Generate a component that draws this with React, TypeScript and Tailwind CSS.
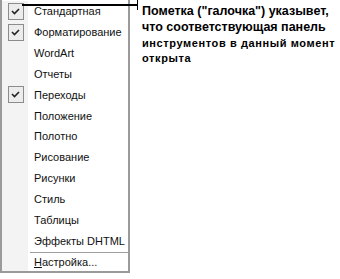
import React from "react";

const items: { label: React.ReactNode; checked?: boolean }[] = [
  { label: "Стандартная", checked: true },
  { label: "Форматирование", checked: true },
  { label: "WordArt" },
  { label: "Отчеты" },
  { label: "Переходы", checked: true },
  { label: "Положение" },
  { label: "Полотно" },
  { label: "Рисование" },
  { label: "Рисунки" },
  { label: "Стиль" },
  { label: "Таблицы" },
  { label: "Эффекты DHTML" },
];

function Check() {
  return (
    <svg width="9" height="7" viewBox="0 0 9 7">
      <path d="M1 3 L3.5 5.5 L8 1" fill="none" stroke="#222" strokeWidth="1.6" />
    </svg>
  );
}

function Row({ label, checked }: { label: React.ReactNode; checked?: boolean }) {
  return (
    <div className="flex h-[21px] items-center">
      <div className="flex w-[26px] h-full items-center justify-center bg-[#f3f3f3]">
        {checked ? (
          <div className="ml-[1px] flex h-[17px] w-[16px] items-center justify-center border border-[#8c8c8c] bg-[#ececec]">
            <Check />
          </div>
        ) : null}
      </div>
      <div className="whitespace-nowrap pl-[6px] text-[11px] text-[#111]">{label}</div>
    </div>
  );
}

export default function App() {
  return (
    <div
      className="relative flex h-[279px] w-[340px] bg-white"
      style={{ fontFamily: '"Liberation Sans", Arial, sans-serif' }}
    >
      <div className="flex h-[273px] w-[130px] shrink-0 flex-col border-l-2 border-r-2 border-b-2 border-[#9a9a9a] pt-[1px]">
        {items.map((it, i) => (
          <Row key={i} label={it.label} checked={it.checked} />
        ))}
        <div className="flex h-[3px] items-center">
          <div className="h-full w-[26px] bg-[#f3f3f3]" />
          <div className="ml-[2px] h-[1px] flex-1 bg-[#a0a0a0]" />
        </div>
        <div className="flex flex-1 items-center">
          <div className="h-full w-[26px] bg-[#f3f3f3]" />
          <div className="whitespace-nowrap pl-[6px] text-[11px] text-[#111]">
            <span className="underline">Н</span>астройка...
          </div>
        </div>
      </div>

      <div className="flex flex-col whitespace-nowrap pl-[12px] pt-[3px] font-bold text-black">
        <div className="text-[12.5px] leading-[16px]">Пометка ("галочка") указывет,</div>
        <div className="text-[12.5px] leading-[16px]">что соответствующая панель</div>
        <div className="text-[11px] leading-[16px] tracking-[0.6px]">инструментов в данный момент</div>
        <div className="text-[11px] leading-[14px] tracking-[0.6px]">открыта</div>
      </div>

      <div className="absolute left-[22px] top-[4px] h-[2px] w-[116px] bg-black" />
      <div className="absolute left-[137px] top-0 h-[10px] w-[1px] bg-black" />
    </div>
  );
}
